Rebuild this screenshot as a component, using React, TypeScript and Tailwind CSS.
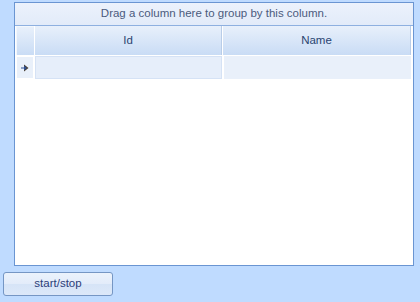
export default function App() {
  return (
    <div className="flex h-[302px] w-[420px] flex-col bg-[#bfdbff] font-['Liberation_Sans',Arial,sans-serif] text-[11.5px]">
      {/* grid control */}
      <div className="pl-[14px] pt-[2px]">
        <div className="flex h-[264px] w-[400px] flex-col border border-[#6a95d2] bg-white">
          {/* group panel */}
          <div className="flex h-[23px] shrink-0 items-center justify-center border-b border-[#8eb0e0] bg-gradient-to-b from-[#ecf2fc] to-[#e2ebf9] text-[#4b5b7d]">
            Drag a column here to group by this column.
          </div>

          {/* column headers */}
          <div className="flex h-[30px] shrink-0 gap-px border-b border-white bg-white pl-px">
            <div className="w-[18px] border-l border-t border-[#f2f7fd] bg-gradient-to-b from-[#e8f0fb] to-[#c9dcf5]" />
            <div className="flex w-[187px] items-center justify-center border-r border-[#b9cde8] bg-gradient-to-b from-[#e8f0fb] to-[#c9dcf5] pt-px text-[#2a4471]">
              Id
            </div>
            <div className="flex w-[188px] items-center justify-center border-r border-[#b9cde8] bg-gradient-to-b from-[#e8f0fb] to-[#c9dcf5] pt-px text-[#2a4471]">
              Name
            </div>
          </div>

          {/* data row */}
          <div className="flex h-[24px] shrink-0 gap-px border-b border-white bg-white pl-px">
            <div className="flex w-[18px] items-center justify-center border border-white bg-[#e9f0fa]">
              <svg width="8" height="8" viewBox="0 0 8 8">
                <rect x="0" y="3.5" width="3" height="1" fill="#2f4f8f" />
                <path d="M3 0.5 L7.5 4 L3 7.5 Z" fill="#4a3b2a" />
                <path d="M3 1.5 L6 4 L3 6.5 Z" fill="#2f4f8f" />
              </svg>
            </div>
            <div className="w-[187px] border border-[#d5e2f5] bg-[#e6eefa]" />
            <div className="w-[188px] border-l border-white bg-[#e9f0fa]" />
          </div>

          <div className="flex-1 bg-white" />
        </div>
      </div>

      {/* button */}
      <div className="pl-[3px] pt-[6px]">
        <button className="flex h-[24px] w-[110px] items-center justify-center rounded-[3px] border border-[#7596c4] bg-[linear-gradient(to_bottom,#ebf2fc_0%,#e3ecfa_50%,#d6e4f7_52%,#dce8f9_100%)] text-[#2b3d78]">
          start/stop
        </button>
      </div>
    </div>
  )
}
